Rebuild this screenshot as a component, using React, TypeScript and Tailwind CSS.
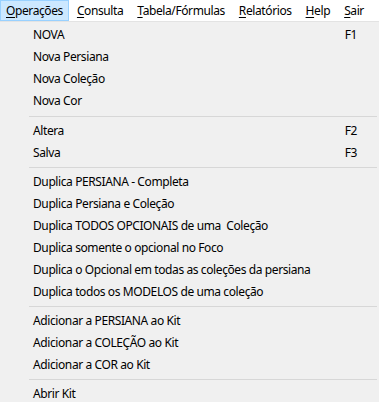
import React from "react";

type Item = { label: string; key?: string } | "sep" | "sep8";

const items: Item[] = [
  { label: "NOVA", key: "F1" },
  { label: "Nova Persiana" },
  { label: "Nova Coleção" },
  { label: "Nova Cor" },
  "sep8",
  { label: "Altera", key: "F2" },
  { label: "Salva", key: "F3" },
  "sep",
  { label: "Duplica PERSIANA - Completa" },
  { label: "Duplica Persiana e Coleção" },
  { label: "Duplica TODOS OPCIONAIS de uma  Coleção" },
  { label: "Duplica somente o opcional no Foco" },
  { label: "Duplica o Opcional em todas as coleções da persiana" },
  { label: "Duplica todos os MODELOS de uma coleção" },
  "sep",
  { label: "Adicionar a PERSIANA ao Kit" },
  { label: "Adicionar a COLEÇÃO ao Kit" },
  { label: "Adicionar a COR ao Kit" },
  "sep",
  { label: "Abrir Kit" },
];

const menus = [
  { first: "O", rest: "perações", active: true },
  { first: "C", rest: "onsulta" },
  { first: "T", rest: "abela/Fórmulas" },
  { first: "R", rest: "elatórios" },
  { first: "H", rest: "elp" },
  { first: "S", rest: "air" },
];

export default function App() {
  return (
    <div
      className="w-[379px] h-[402px] overflow-hidden bg-[#f0f0f0] text-black text-[12px] leading-none tracking-[-0.4px]"
      style={{ fontFamily: '"Noto Sans", "Open Sans", sans-serif' }}
    >
      <div className="flex h-[21px] bg-white items-stretch">
        {menus.map((m, i) => (
          <div
            key={i}
            className={
              "flex items-center px-[5px] mr-[2px] " +
              (m.active ? "bg-[#cce8ff] border border-[#99d1ff]" : "border border-transparent")
            }
          >
            <span>
              <span className="underline underline-offset-2">{m.first}</span>
              {m.rest}
            </span>
          </div>
        ))}
      </div>
      <div className="h-[1px] bg-[#e3e3e3]" />
      <div className="flex flex-col pt-[2px]">
        {items.map((it, i) =>
          it === "sep" || it === "sep8" ? (
            <div
              key={i}
              className={(it === "sep8" ? "h-[8px]" : "h-[7px]") + " flex items-center pl-[29px] pr-[2px]"}
            >
              <div className="h-[1px] w-full bg-[#d7d7d7]" />
            </div>
          ) : (
            <div key={i} className="h-[22px] flex items-center pl-[33px] pr-[22px]">
              <span className="flex-1 whitespace-pre">{it.label}</span>
              {it.key && <span>{it.key}</span>}
            </div>
          )
        )}
      </div>
    </div>
  );
}
